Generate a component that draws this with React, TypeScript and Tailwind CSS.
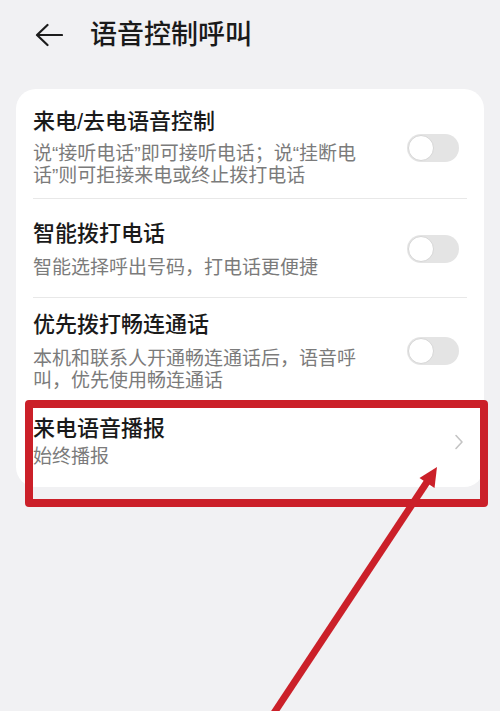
import React from 'react';

interface SettingRowProps {
  title: string;
  subtitle: string;
  rowClass: string;
  gapClass?: string;
  subFont?: string;
  trailing: 'toggle' | 'chevron';
  divider?: boolean;
}

const Toggle: React.FC = () => (
  <div className="mr-[8px] flex h-[28px] w-[52px] shrink-0 items-center rounded-full bg-[#e4e4e4] p-[1px]">
    <div className="h-[26px] w-[26px] rounded-full border border-[#d6d6d6] bg-white" />
  </div>
);

const Chevron: React.FC = () => (
  <svg width="10" height="16" viewBox="0 0 10 16" className="mr-[3px] shrink-0">
    <path d="M2 1.5 L8 8 L2 14.5" fill="none" stroke="#c4c4c4" strokeWidth="1.6" strokeLinecap="round" strokeLinejoin="round" />
  </svg>
);

const SettingRow: React.FC<SettingRowProps> = ({ title, subtitle, rowClass, gapClass = 'mt-[7px]', subFont = '', trailing, divider = true }) => (
  <div className={`flex items-center justify-between ${divider ? 'border-b border-[#e8e8e8]' : ''} ${rowClass}`}>
    <div className="max-w-[336px] flex-1">
      <div className="text-[22px] leading-[28px] font-medium text-[#1a1a1a]">{title}</div>
      <div className={`text-[19px] leading-[22px] text-[#7b7b7b] ${gapClass} ${subFont}`}>{subtitle}</div>
    </div>
    {trailing === 'toggle' ? <Toggle /> : <Chevron />}
  </div>
);

export default function App() {
  return (
    <div
      lang="zh-CN"
      className="relative h-[711px] w-full overflow-hidden bg-[#f1f1f3] font-['Liberation_Sans','Noto_Sans_CJK_SC',sans-serif]"
    >
      {/* Header */}
      <div className="flex h-[69px] items-center">
        <svg width="28" height="24" viewBox="0 0 28 24" className="ml-[35px] shrink-0">
          <path d="M27 12 H2.5 M12.5 2 L2 12 L12.5 22" fill="none" stroke="#1c1c1c" strokeWidth="2.2" strokeLinecap="round" strokeLinejoin="round" />
        </svg>
        <div className="ml-[27px] text-[27px] leading-[34px] font-medium text-[#1a1a1a]">语音控制呼叫</div>
      </div>

      {/* Settings card */}
      <div className="mx-[16px] mt-[20px] rounded-[20px] bg-white px-[17px]">
        <SettingRow
          title="来电/去电语音控制"
          subtitle="说“接听电话”即可接听电话；说“挂断电话”则可拒接来电或终止拨打电话"
          rowClass="pt-[19px] pb-[11px]"
          trailing="toggle"
        />
        <SettingRow
          title="智能拨打电话"
          subtitle="智能选择呼出号码，打电话更便捷"
          rowClass="pt-[21px] pb-[20px]"
          subFont="font-['Noto_Sans_CJK_SC',sans-serif]"
          trailing="toggle"
        />
        <SettingRow
          title="优先拨打畅连通话"
          subtitle="本机和联系人开通畅连通话后，语音呼叫，优先使用畅连通话"
          rowClass="pt-[13px] pb-[11px]"
          subFont="font-['Noto_Sans_CJK_SC',sans-serif]"
          trailing="toggle"
        />
        <SettingRow
          title="来电语音播报"
          subtitle="始终播报"
          rowClass="pt-[13px] pb-[19px]"
          gapClass="mt-[3px]"
          trailing="chevron"
          divider={false}
        />
      </div>

      {/* Annotation: red highlight box + arrow */}
      <div className="pointer-events-none absolute left-[25px] top-[400px] h-[107px] w-[463px] rounded-[4px] border-[8px] border-[#cb2029]" />
      <svg className="pointer-events-none absolute left-0 top-0" width="500" height="711" viewBox="0 0 500 711">
        <line x1="272" y1="716" x2="429" y2="479" stroke="#cb2029" strokeWidth="7" />
        <polygon points="437,467 419.5,478 434.5,488" fill="#cb2029" />
      </svg>
    </div>
  );
}
